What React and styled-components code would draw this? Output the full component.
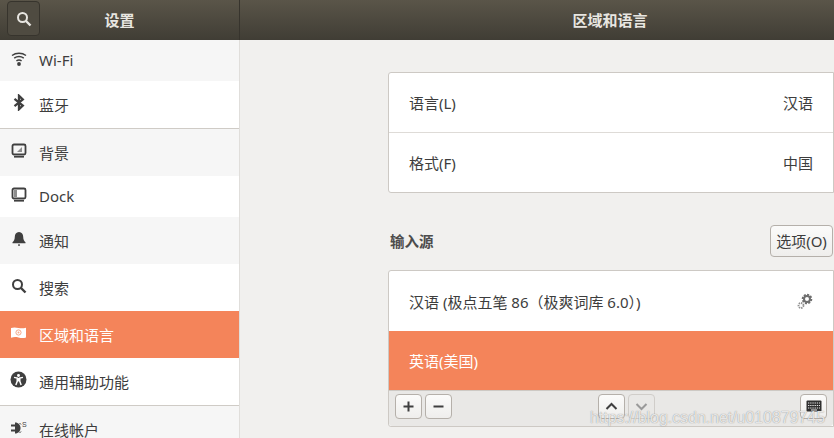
import React from "react";
import styled, { createGlobalStyle } from "styled-components";

const GlobalStyle = createGlobalStyle`
html, body {
  margin:0;
  padding:0;
  width:834px;
  height:438px;
  overflow:hidden;
  background:#f1f0ee;
}
`;

const FONT = `"Noto Sans", "Noto Sans CJK SC", sans-serif`;

const Window = styled.div`
position:relative;
width:834px;
height:438px;
overflow:hidden;
display:flex;
flex-direction:column;
font-family:${FONT};
font-size:15px;
color:#3d3d3d;
`;
const TitleBar = styled.div`
display:flex;
flex-direction:row;
height:40px;
flex:none;
background:linear-gradient(#5a5549, #403d35);
color:#e8e6e1;
`;
const TitleLeft = styled.div`
position:relative;
display:flex;
align-items:center;
justify-content:center;
width:240px;
box-sizing:border-box;
padding:0 0 2px 0;
border-right:1px solid #37342d;
font-weight:700;
`;
const TitleRight = styled.div`
flex:1;
display:flex;
align-items:center;
justify-content:center;
padding:0 0 2px 146px;
font-weight:700;
`;
const SearchButton = styled.div`
position:absolute;
left:7px;
top:1px;
width:33px;
height:35px;
box-sizing:border-box;
display:flex;
align-items:center;
justify-content:center;
border:1px solid #37342d;
border-radius:4px;
background:#4f4b41;
`;
const Body = styled.div`
flex:1;
display:flex;
flex-direction:row;
min-height:0;
`;
const Sidebar = styled.div`
width:240px;
flex:none;
box-sizing:border-box;
border-right:1px solid #e0dedb;
display:flex;
flex-direction:column;
overflow:hidden;
`;
const Item = styled.div`
display:flex;
flex-direction:row;
align-items:center;
flex:none;
height:${(p) => p.$h}px;
padding-bottom:1px;
box-sizing:content-box;
background:${(p) => (p.$active ? "#f4845a" : p.$gray ? "#f6f6f6" : "#ffffff")};
color:${(p) => (p.$active ? "#ffffff" : "#3d3d3d")};
border-bottom:${(p) => (p.$line ? "1px solid #cfcbc6" : "none")};
`;
const ItemIcon = styled.div`
width:39px;
flex:none;
display:flex;
justify-content:center;
box-sizing:border-box;
padding:0 2px 3px 0;
`;
const Main = styled.div`
flex:1;
padding:32px 0 0 148px;
display:flex;
flex-direction:column;
min-width:0;
`;
const Card = styled.div`
width:446px;
box-sizing:border-box;
border:1px solid #cdc9c4;
border-radius:3px 0 0 3px;
background:#fff;
display:flex;
flex-direction:column;
`;
const Row = styled.div`
display:flex;
align-items:center;
justify-content:space-between;
height:${(p) => p.$h || 59}px;
padding:0 20px 0 20px;
box-sizing:border-box;
background:${(p) => (p.$active ? "#f4845a" : "transparent")};
color:${(p) => (p.$active ? "#fff" : "#3d3d3d")};
border-top:${(p) => (p.$line ? "1px solid #dedbd7" : "none")};
`;
const SectionHead = styled.div`
display:flex;
align-items:center;
justify-content:space-between;
height:32px;
margin:32px 0 13px;
width:445px;
padding-left:2px;
box-sizing:border-box;
font-size:14.500px;
font-weight:700;
color:#4c4c4c;
`;
const SectionTitle = styled.span`
margin-bottom:2px;
`;
const OptionButton = styled.div`
width:63px;
height:32px;
box-sizing:border-box;
display:flex;
align-items:center;
justify-content:center;
padding-bottom:2px;
border:1px solid #b5b0aa;
border-radius:4px;
background:linear-gradient(#fbfbfa, #efeeec);
font-size:15px;
font-weight:400;
color:#3d3d3d;
`;
const Toolbar = styled.div`
display:flex;
align-items:center;
height:36px;
box-sizing:border-box;
padding:0 5px 5px 6px;
background:#e9e8e6;
border-top:1px solid #cdc9c4;
border-radius:0 0 3px 3px;
`;
const ToolButton = styled.div`
width:27px;
height:25px;
box-sizing:border-box;
margin-left:${(p) => p.$ml || 0}px;
display:flex;
align-items:center;
justify-content:center;
border:1px solid ${(p) => (p.$off ? "#d0cdc9" : "#b5b0aa")};
border-radius:4px;
background:${(p) => (p.$off ? "#e9e8e6" : "linear-gradient(#fbfbfa, #efeeec)")};
`;
const Watermark = styled.div`
position:absolute;
left:590px;
top:409px;
font-family:"Liberation Sans", sans-serif;
font-size:15.900px;
color:rgba(255,255,255,0.78);
text-shadow:0 0 1px rgba(90,90,90,0.75);
white-space:nowrap;
`;

const ICON = "#3f3f3f";

const SearchIcon = ({ color = ICON }) => (
  <svg width="16" height="16" viewBox="0 0 16 16" fill="none" stroke={color} strokeWidth="2">
    <circle cx="6.500" cy="6.500" r="4.500" />
    <path d="M10 10l4.500 4.500" strokeWidth="2.400" />
  </svg>
);
const WifiIcon = () => (
  <svg width="16" height="16" viewBox="0 0 16 16" fill="none" stroke={ICON} strokeWidth="1.500">
    <path d="M1 4.500c4-3 10-3 14 0" />
    <path d="M3.200 7.200c3-2 6.600-2 9.600 0" />
    <path d="M5.400 9.800c1.600-1 3.600-1 5.200 0" />
    <circle cx="8" cy="13" r="1.900" fill={ICON} stroke="none" />
  </svg>
);
const BluetoothIcon = () => (
  <svg width="16" height="17" viewBox="0 0 16 17" fill="none" stroke={ICON} strokeWidth="2.300">
    <path d="M3.500 4.800L11.800 11.500 8 15.200V1.800L11.800 5.500 3.500 12.200" />
  </svg>
);
const BackgroundIcon = () => (
  <svg width="16" height="16" viewBox="0 0 16 16">
    <rect x="1.500" y="1.500" width="13" height="10" rx="1.500" fill="none" stroke={ICON} strokeWidth="1.800" />
    <path d="M6 9l5-5v5z" fill="#8d8d8d" />
    <rect x="3" y="13" width="10" height="1.600" fill={ICON} />
  </svg>
);
const DockIcon = () => (
  <svg width="16" height="16" viewBox="0 0 16 16">
    <rect x="1.500" y="1.500" width="13" height="10" rx="1.500" fill="none" stroke={ICON} strokeWidth="1.800" />
    <rect x="3" y="3" width="3" height="7" fill="#8d8d8d" />
    <rect x="3" y="13" width="10" height="1.600" fill={ICON} />
  </svg>
);
const BellIcon = () => (
  <svg width="16" height="16" viewBox="0 0 16 16" fill={ICON}>
    <path d="M8 1c-2.800 0-4.200 2.200-4.200 4.800 0 2.800-.8 4.200-2.300 5.400v1h13v-1c-1.500-1.200-2.300-2.600-2.300-5.400C12.200 3.200 10.800 1 8 1z" />
    <rect x="7" y="13.400" width="2" height="1.300" />
  </svg>
);
const FlagIcon = () => (
  <svg width="17" height="16" viewBox="0 0 16 16">
    <path d="M.5 3c2.700-1 5-.6 7.500 0s5 .4 7.500-.2V12.500c-2.500.8-5 .6-7.500 0s-4.800-.6-7.500.2z" fill="#fff" />
    <circle cx="8" cy="7.500" r="2.600" fill="none" stroke="#f4a98a" strokeWidth="1" />
    <circle cx="8" cy="7.500" r="1" fill="#f4a98a" />
  </svg>
);
const AccessIcon = () => (
  <svg width="17" height="17" viewBox="0 0 16 16">
    <circle cx="8" cy="8" r="7.500" fill={ICON} />
    <circle cx="8" cy="4.200" r="1.400" fill="#fff" />
    <path d="M3.800 6l3 .7v3L5.500 13.200M12.200 6l-3 .7v3l1.300 3.500" fill="none" stroke="#fff" strokeWidth="1.400" />
    <path d="M6.800 6.500h2.400v3.300H6.800z" fill="#fff" />
  </svg>
);
const PlugIcon = () => (
  <svg width="17" height="16" viewBox="0 0 17 16">
    <path d="M1 5.500h4M1 10.500h4" stroke={ICON} strokeWidth="1.800" />
    <path d="M5 2.500c3.500 0 5.500 2.500 5.500 5.500S8.500 13.500 5 13.500z" fill={ICON} />
    <path d="M9.500 3l1.500 1.500M9.500 13l1.500-1.500" stroke={ICON} />
    <text x="12" y="7" fontSize="7" fontFamily="Liberation Sans" fill={ICON}>S</text>
  </svg>
);
const GearIcon = () => (
  <svg width="16" height="17" viewBox="0 0 16 17" fill="none">
    <circle cx="10" cy="6" r="4.300" stroke="#6f6f6f" strokeWidth="2" strokeDasharray="2 1.300" />
    <circle cx="10" cy="6" r="3" stroke="#6f6f6f" strokeWidth="2" />
    <circle cx="4" cy="12.500" r="2.500" stroke="#909090" strokeWidth="1.800" strokeDasharray="1.400 0.900" />
  </svg>
);
const KeyboardIcon = () => (
  <svg width="16" height="12" viewBox="0 0 16 12">
    <rect x="0.500" y="0.500" width="15" height="11" rx="1" fill="#2f2f2f" />
    <path d="M2 3h12M2 5.500h12" stroke="#e8e8e8" strokeWidth="1" strokeDasharray="1.300 0.900" />
    <path d="M2 8h12" stroke="#e8e8e8" strokeWidth="1" strokeDasharray="1.300 0.900" />
    <path d="M5 10h6" stroke="#e8e8e8" strokeWidth="1" />
  </svg>
);
const Glyph = ({ d, color = "#3f3f3f" }) => (
  <svg width="13" height="13" viewBox="0 0 13 13" fill="none" stroke={color} strokeWidth="2">
    <path d={d} />
  </svg>
);

const items = [
  { label: "Wi-Fi", icon: <WifiIcon />, h: 40, gray: true },
  { label: "蓝牙", icon: <BluetoothIcon />, h: 46, line: true },
  { label: "背景", icon: <BackgroundIcon />, h: 46, gray: true },
  { label: "Dock", icon: <DockIcon />, h: 40 },
  { label: "通知", icon: <BellIcon />, h: 46, gray: true },
  { label: "搜索", icon: <SearchIcon />, h: 46 },
  { label: "区域和语言", icon: <FlagIcon />, h: 46, active: true },
  { label: "通用辅助功能", icon: <AccessIcon />, h: 46, line: true },
  { label: "在线帐户", icon: <PlugIcon />, h: 46, gray: true },
];

function App() {
  return (
    <Window>
      <GlobalStyle />
      <TitleBar>
        <TitleLeft>
          <SearchButton>
            <SearchIcon color="#e8e6e1" />
          </SearchButton>
          设置
        </TitleLeft>
        <TitleRight>区域和语言</TitleRight>
      </TitleBar>
      <Body>
        <Sidebar>
          {items.map((it) => (
            <Item key={it.label} $h={it.h} $gray={it.gray} $line={it.line} $active={it.active}>
              <ItemIcon>{it.icon}</ItemIcon>
              {it.label}
            </Item>
          ))}
        </Sidebar>
        <Main>
          <Card>
            <Row $h={59}>
              <span>语言(L)</span>
              <span>汉语</span>
            </Row>
            <Row $h={60} $line>
              <span>格式(F)</span>
              <span>中国</span>
            </Row>
          </Card>
          <SectionHead>
            <SectionTitle>输入源</SectionTitle>
            <OptionButton>选项(O)</OptionButton>
          </SectionHead>
          <Card>
            <Row $h={60}>
              <span>汉语 (极点五笔 86（极爽词库 6.0）)</span>
              <GearIcon />
            </Row>
            <Row $h={59} $active>
              <span>英语(美国)</span>
            </Row>
            <Toolbar>
              <ToolButton>
                <Glyph d="M6.500 1.500v10M1.500 6.500h10" />
              </ToolButton>
              <ToolButton $ml={3}>
                <Glyph d="M1.500 6.500h10" />
              </ToolButton>
              <ToolButton $ml={146}>
                <Glyph d="M1.500 9l5-5 5 5" />
              </ToolButton>
              <ToolButton $ml={3} $off>
                <Glyph d="M1.500 4l5 5 5-5" color="#9a9a9a" />
              </ToolButton>
              <ToolButton $ml={145}>
                <KeyboardIcon />
              </ToolButton>
            </Toolbar>
          </Card>
        </Main>
      </Body>
      <Watermark>https://blog.csdn.net/u010879745</Watermark>
    </Window>
  );
}

export default App;
